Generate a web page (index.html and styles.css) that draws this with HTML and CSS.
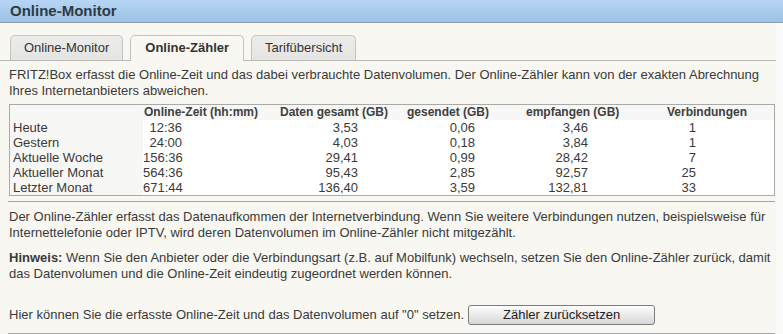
FILE: index.html
```html
<!DOCTYPE html>
<html lang="de">
<head>
  <meta charset="UTF-8" />
  <title>Online-Monitor</title>
  <link rel="stylesheet" href="styles.css">
</head>
<body>
  <div class="page-title">Online-Monitor</div>

  <div class="content">
    <div class="tabs">
      <div class="tab">Online-Monitor</div>
      <div class="tab active">Online-Zähler</div>
      <div class="tab">Tarifübersicht</div>
    </div>

    <div class="panel">
      <p class="intro">FRITZ!Box erfasst die Online-Zeit und das dabei verbrauchte Datenvolumen. Der Online-Zähler kann von der exakten Abrechnung Ihres Internetanbieters abweichen.</p>

      <div class="table-box">
        <table class="counter">
          <colgroup>
            <col class="c-label">
            <col class="c-time">
            <col class="c-total">
            <col class="c-sent">
            <col class="c-recv">
            <col class="c-conn">
          </colgroup>
          <thead>
            <tr>
              <th></th>
              <th class="h-time">Online-Zeit (hh:mm)</th>
              <th class="h-total">Daten gesamt (GB)</th>
              <th class="h-sent">gesendet (GB)</th>
              <th class="h-recv">empfangen (GB)</th>
              <th class="h-conn">Verbindungen</th>
            </tr>
          </thead>
          <tbody>
            <tr><td class="label">Heute</td><td class="v-time">12:36</td><td class="v-total">3,53</td><td class="v-sent">0,06</td><td class="v-recv">3,46</td><td class="v-conn">1</td></tr>
            <tr><td class="label">Gestern</td><td class="v-time">24:00</td><td class="v-total">4,03</td><td class="v-sent">0,18</td><td class="v-recv">3,84</td><td class="v-conn">1</td></tr>
            <tr><td class="label">Aktuelle Woche</td><td class="v-time">156:36</td><td class="v-total">29,41</td><td class="v-sent">0,99</td><td class="v-recv">28,42</td><td class="v-conn">7</td></tr>
            <tr><td class="label">Aktueller Monat</td><td class="v-time">564:36</td><td class="v-total">95,43</td><td class="v-sent">2,85</td><td class="v-recv">92,57</td><td class="v-conn">25</td></tr>
            <tr><td class="label">Letzter Monat</td><td class="v-time">671:44</td><td class="v-total">136,40</td><td class="v-sent">3,59</td><td class="v-recv">132,81</td><td class="v-conn">33</td></tr>
          </tbody>
        </table>
      </div>

      <hr class="rule">

      <p class="note">Der Online-Zähler erfasst das Datenaufkommen der Internetverbindung. Wenn Sie weitere Verbindungen nutzen, beispielsweise für Internettelefonie oder IPTV, wird deren Datenvolumen im Online-Zähler nicht mitgezählt.</p>

      <p class="hint"><strong>Hinweis:</strong> Wenn Sie den Anbieter oder die Verbindungsart (z.B. auf Mobilfunk) wechseln, setzen Sie den Online-Zähler zurück, damit das Datenvolumen und die Online-Zeit eindeutig zugeordnet werden können.</p>

      <div class="reset-row">
        <span>Hier können Sie die erfasste Online-Zeit und das Datenvolumen auf "0" setzen.</span>
        <button class="reset-btn">Zähler zurücksetzen</button>
      </div>

      <hr class="rule bottom">
    </div>
  </div>
</body>
</html>
```

FILE: styles.css
```css
:root {
  --text: #3a3a3a;
  --content-bg: #f8f7f2;
  --tab-bg: #e9e9e8;
  --tab-border: #c3c3c3;
  --rule: #a4a4a4;
}

html, body {
  margin: 0;
  padding: 0;
}

body {
  background: #fbfbf9;
  color: var(--text);
  font-family: "Liberation Sans", Arial, sans-serif;
  font-size: 13px;
  line-height: 16px;
}

.page-title {
  height: 22px;
  line-height: 22px;
  padding-left: 10px;
  font-size: 15px;
  font-weight: bold;
  color: #2f3a44;
  background: linear-gradient(#b6d5f4, #9cc2e4);
  border-bottom: 1px solid #8d9eae;
}

.content {
  width: 776px;
  background: var(--content-bg);
  padding-top: 12px;
}

.tabs {
  display: flex;
  gap: 7px;
  padding-left: 10px;
  border-bottom: 1px solid #b8b8b4;
}

.tab {
  height: 24px;
  line-height: 24px;
  padding: 0 13px;
  border: 1px solid var(--tab-border);
  border-bottom: none;
  border-radius: 5px 5px 0 0;
  background: linear-gradient(#ececeb, #e4e4e3);
  color: #333;
}

.tab.active {
  height: 25px;
  margin-bottom: -1px;
  padding: 0 14px;
  background: var(--content-bg);
  font-weight: bold;
  color: #333;
}

.panel {
  padding: 0 1px 1px 9px;
}

.panel p {
  margin: 0;
}

.intro {
  padding-top: 6px;
}

.table-box {
  margin-top: 5px;
  border: 1px solid #a9a9a9;
  background: #f7f7f5;
}

.counter {
  border-collapse: collapse;
  table-layout: fixed;
  width: 100%;
}

.counter th,
.counter td {
  padding: 0;
  height: 15px;
  line-height: 15px;
  white-space: nowrap;
}

.counter th {
  font-size: 12px;
  font-weight: bold;
  color: #404040;
  text-align: left;
}

.counter tbody td {
  background: #fff;
  text-align: right;
}

.counter tbody td.label {
  background: transparent;
  text-align: left;
  padding-left: 3px;
}

.c-label { width: 133px; }
.c-time { width: 127px; }
.c-total { width: 125px; }
.c-sent { width: 105px; }
.c-recv { width: 140px; }

.h-time { padding-left: 1px !important; }
.h-total { padding-left: 10px !important; }
.h-sent { padding-left: 12px !important; }
.h-recv { padding-left: 26px !important; }
.h-conn { padding-left: 27px !important; }

.v-time { padding-right: 88px !important; }
.v-total { padding-right: 37px !important; }
.v-sent { padding-right: 25px !important; }
.v-recv { padding-right: 52px !important; }
.v-conn { padding-right: 78px !important; }

.rule {
  border: none;
  border-top: 1px solid var(--rule);
  margin: 5px 0 0 -1px;
  height: 0;
}

.note {
  padding-top: 7px;
}

.hint {
  padding-top: 9px;
}

.reset-row {
  display: flex;
  align-items: center;
  height: 20px;
  margin-top: 23px;
}

.reset-btn {
  width: 187px;
  height: 20px;
  margin-left: 4px;
  padding: 0;
  font: inherit;
  color: #222;
  border: 1px solid #7b7b7b;
  border-radius: 3px;
  background: linear-gradient(#fdfdfd, #e6e6e6 60%, #d6d6d6);
}

.rule.bottom {
  margin-top: 8px;
}
```
